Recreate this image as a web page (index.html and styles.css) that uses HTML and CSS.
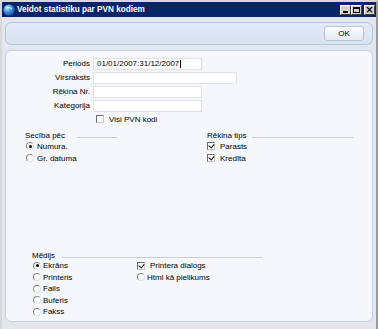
FILE: index.html
```html
<!DOCTYPE html>
<html>
<head>
<meta charset="utf-8">
<link rel="stylesheet" href="styles.css">
</head>
<body>
<div class="window">
  <div class="titlebar">
    <svg class="appicon" width="12" height="12" viewBox="0 0 12 12">
      <defs>
        <radialGradient id="g" cx="0.35" cy="0.3" r="0.8">
          <stop offset="0" stop-color="#bfe6ff"/>
          <stop offset="0.5" stop-color="#3d8fd8"/>
          <stop offset="1" stop-color="#0d4a9c"/>
        </radialGradient>
      </defs>
      <circle cx="6" cy="6" r="5.6" fill="url(#g)"/>
      <path d="M3 4 Q6 2 9 5" stroke="#e8f6ff" stroke-width="1" fill="none"/>
    </svg>
    <span class="title">Veidot statistiku par PVN kodiem</span>
    <div class="winbtns">
      <div class="wb"><span class="g-min"></span></div>
      <div class="wb"><span class="g-max"></span></div>
      <div class="wb close"><span class="g-x">×</span></div>
    </div>
  </div>
  <div class="client">
    <div class="toolbar">
      <div class="ok">OK</div>
    </div>
    <div class="panel">
      <div class="form">
        <div class="lbl">Periods</div>
        <div class="inp w-short">01/01/2007:31/12/2007<span class="caret"></span></div>
        <div class="lbl">Virsraksts</div>
        <div class="inp w-long"></div>
        <div class="lbl">Rēķina Nr.</div>
        <div class="inp w-short"></div>
        <div class="lbl">Kategorija</div>
        <div class="inp w-short"></div>
        <div></div>
        <div class="chkrow"><span class="cb"></span>Visi PVN kodi</div>
      </div>

      <div class="groups">
        <div class="group g-sort">
          <div class="ghead"><span>Secība pēc</span><span class="line l-sort"></span></div>
          <div class="opt"><span class="rb on"></span>Numura.</div>
          <div class="opt"><span class="rb"></span>Gr. datuma</div>
        </div>
        <div class="group g-type">
          <div class="ghead"><span>Rēķina tips</span><span class="line l-type"></span></div>
          <div class="opt"><span class="cb on"></span>Parasts</div>
          <div class="opt"><span class="cb on"></span>Kredīta</div>
        </div>
      </div>

      <div class="group g-media">
        <div class="ghead"><span>Mēdijs</span><span class="line l-media"></span></div>
        <div class="mcols">
          <div class="mcol">
            <div class="opt m"><span class="rb on"></span>Ekrāns</div>
            <div class="opt m"><span class="rb"></span>Printeris</div>
            <div class="opt m"><span class="rb"></span>Fails</div>
            <div class="opt m"><span class="rb"></span>Buferis</div>
            <div class="opt m"><span class="rb"></span>Fakss</div>
          </div>
          <div class="mcol mcol2">
            <div class="opt m"><span class="cb on"></span>Printera dialogs</div>
            <div class="opt m"><span class="rb"></span>Html kā pielikums</div>
          </div>
        </div>
      </div>
    </div>
  </div>
</div>
</body>
</html>
```

FILE: styles.css
```css
* { box-sizing: border-box; }
html, body { margin: 0; padding: 0; }
body {
  width: 378px;
  height: 329px;
  overflow: hidden;
  font-family: "Liberation Sans", Arial, sans-serif;
  font-size: 8px;
  color: #000;
  background: #d6d3cb;
}
.window {
  width: 378px;
  height: 329px;
  background: #e3e6ec;
  border-top: 2px solid #d8d8d8;
  border-left: 2px solid #d8d8d8;
  border-right: 2px solid #9a9a9a;
  display: flex;
  flex-direction: column;
}
.titlebar {
  height: 15px;
  background: #0a246a;
  display: flex;
  align-items: center;
  padding-left: 1px;
  padding-right: 1px;
}
.appicon { display: block; margin-right: 2px; }
.title {
  color: #fff;
  font-weight: bold;
  font-size: 8.2px;
  flex: 1;
  white-space: nowrap;
}
.winbtns { display: flex; align-items: center; gap: 0; }
.wb {
  width: 11px;
  height: 10px;
  background: #d4d0c8;
  border-top: 1px solid #fff;
  border-left: 1px solid #fff;
  border-right: 1px solid #404040;
  border-bottom: 1px solid #404040;
  position: relative;
  display: flex;
  align-items: center;
  justify-content: center;
}
.wb.close { margin-left: 2px; }
.g-min {
  position: absolute;
  left: 2px;
  bottom: 1px;
  width: 5px;
  height: 2px;
  background: #000;
}
.g-max {
  width: 7px;
  height: 6px;
  border: 1px solid #000;
  border-top-width: 2px;
}
.g-x {
  font-size: 10px;
  font-weight: bold;
  line-height: 8px;
  font-family: "DejaVu Sans", sans-serif;
}
.client {
  flex: 1;
  padding: 5px 3px 0 3px;
  display: flex;
  flex-direction: column;
}
.toolbar {
  height: 23px;
  border: 1px solid #b3c6de;
  border-radius: 6px;
  background: linear-gradient(#e2eaf6, #d8e3f3);
  display: flex;
  align-items: center;
  justify-content: flex-end;
  padding-right: 8px;
}
.ok {
  width: 40px;
  height: 15px;
  border: 1px solid #b8c4d4;
  border-radius: 3px;
  background: linear-gradient(#fbfcfe, #e6ebf2);
  text-align: center;
  line-height: 13px;
  font-size: 8px;
}
.panel {
  margin-top: 5px;
  height: 272px;
  border: 1px solid #c3d2e6;
  border-radius: 6px;
  background: #f5f7fb;
  display: flex;
  flex-direction: column;
}
.form {
  display: grid;
  grid-template-columns: 84px auto;
  column-gap: 3px;
  row-gap: 2px;
  padding-top: 7px;
  align-items: center;
}
.lbl {
  text-align: right;
  height: 12px;
  line-height: 12px;
}
.inp {
  height: 12px;
  border: 1px solid #dfe3e9;
  background: #fff;
  line-height: 10px;
  padding-left: 3px;
  position: relative;
  display: flex;
  align-items: center;
}
.w-short { width: 109px; }
.w-long { width: 144px; }
.caret {
  width: 1px;
  height: 8px;
  background: #000;
  margin-left: 1px;
}
.chkrow {
  height: 10px;
  display: flex;
  align-items: center;
  padding-left: 3px;
}
.cb {
  width: 8px;
  height: 8px;
  border: 1px solid #6d6d6d;
  border-right-color: #c8c8c8;
  border-bottom-color: #c8c8c8;
  background: #fff;
  margin-right: 5px;
  position: relative;
  flex: none;
}
.cb.on::after {
  content: "";
  position: absolute;
  left: 1px;
  top: 0px;
  width: 3px;
  height: 4px;
  border-right: 1.5px solid #000;
  border-bottom: 1.5px solid #000;
  transform: rotate(40deg);
  transform-origin: 60% 60%;
}
.rb {
  width: 8px;
  height: 8px;
  border-radius: 50%;
  border: 1px solid #8a8a8a;
  border-right-color: #e0e0e0;
  border-bottom-color: #e0e0e0;
  background: #fff;
  margin-right: 3px;
  position: relative;
  flex: none;
}
.rb.on::after {
  content: "";
  position: absolute;
  left: 1.5px;
  top: 1.5px;
  width: 3px;
  height: 3px;
  border-radius: 50%;
  background: #000;
}
.groups {
  display: flex;
  margin-top: 7px;
}
.group { display: flex; flex-direction: column; }
.ghead {
  height: 9px;
  display: flex;
  align-items: center;
  line-height: 9px;
  white-space: nowrap;
}
.line {
  flex: 1;
  height: 1px;
  background: #c9cdd4;
  margin-top: 3px;
}
.g-sort { margin-left: 19px; width: 92px; }
.l-sort { margin-left: 12px; }
.g-type { margin-left: 90px; width: 146px; }
.l-type { margin-left: 5px; }
.opt {
  height: 12px;
  display: flex;
  align-items: center;
  white-space: nowrap;
}
.g-sort .opt { padding-left: 1px; }
.g-sort .rb { margin-right: 3px; }
.g-type .cb { margin-right: 5px; }
.g-media {
  margin-top: 87px;
  margin-left: 26px;
  width: 230px;
}
.l-media { margin-left: 7px; }
.mcols { display: flex; }
.mcol { width: 105px; padding-left: 1px; }
.mcol2 { padding-left: 0; }
.opt.m { height: 11.5px; }
.g-media .rb { margin-right: 2px; }
```
